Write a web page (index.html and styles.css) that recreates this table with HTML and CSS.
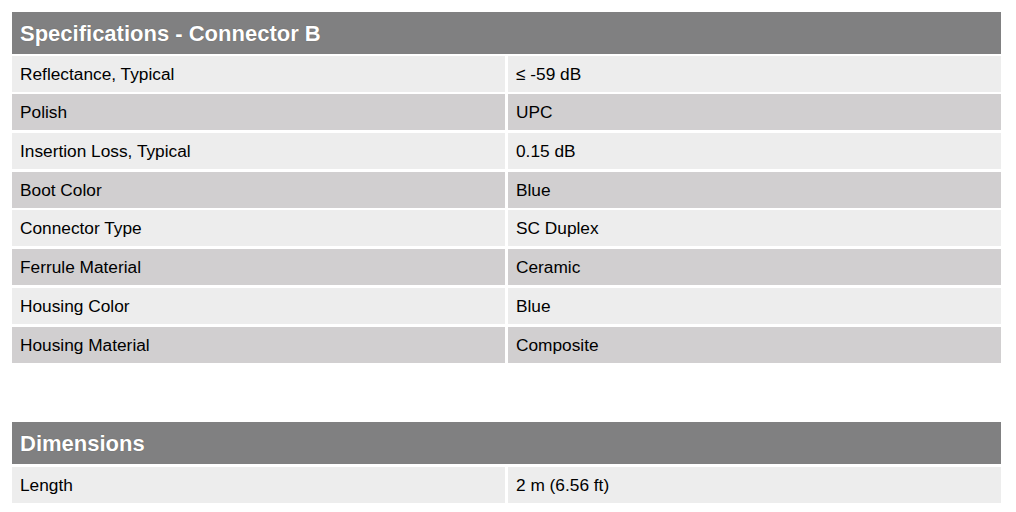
FILE: index.html
```html
<!DOCTYPE html>
<html>
<head>
<meta charset="utf-8">
<link rel="stylesheet" href="styles.css">
</head>
<body>
<div class="page">
  <section class="spec">
    <h2 class="spec-title">Specifications - Connector B</h2>
    <div class="spec-grid">
      <div class="cell light">Reflectance, Typical</div><div class="cell light">≤ -59 dB</div>
      <div class="cell dark">Polish</div><div class="cell dark">UPC</div>
      <div class="cell light">Insertion Loss, Typical</div><div class="cell light">0.15 dB</div>
      <div class="cell dark">Boot Color</div><div class="cell dark">Blue</div>
      <div class="cell light">Connector Type</div><div class="cell light">SC Duplex</div>
      <div class="cell dark">Ferrule Material</div><div class="cell dark">Ceramic</div>
      <div class="cell light">Housing Color</div><div class="cell light">Blue</div>
      <div class="cell dark">Housing Material</div><div class="cell dark">Composite</div>
    </div>
  </section>
  <section class="spec dims">
    <h2 class="spec-title">Dimensions</h2>
    <div class="spec-grid">
      <div class="cell light">Length</div><div class="cell light">2 m (6.56 ft)</div>
    </div>
  </section>
</div>
</body>
</html>
```
FILE: styles.css
```css
html, body {
  margin: 0;
  padding: 0;
  background: #ffffff;
}
body {
  font-family: "Liberation Sans", Arial, sans-serif;
  color: #000;
}
.page {
  padding: 12px 0 0 12px;
  width: 989px;
}
.spec-title {
  margin: 0;
  height: 42px;
  background: #808081;
  color: #ffffff;
  font-size: 22px;
  font-weight: bold;
  line-height: 43px;
  padding-left: 8px;
  text-shadow: 0 0 1px rgba(0,0,0,0.35);
}
.spec-grid {
  display: grid;
  grid-template-columns: 493px 493px;
  column-gap: 3px;
  row-gap: 2.7px;
  margin-top: 1.7px;
}
.cell {
  height: 36px;
  line-height: 37px;
  font-size: 17.3px;
  padding-left: 8px;
}
.light { background: #ededed; }
.dark { background: #d1cfd0; }
.dims {
  margin-top: 59px;
}
.dims .spec-grid {
  margin-top: 3px;
}
```
